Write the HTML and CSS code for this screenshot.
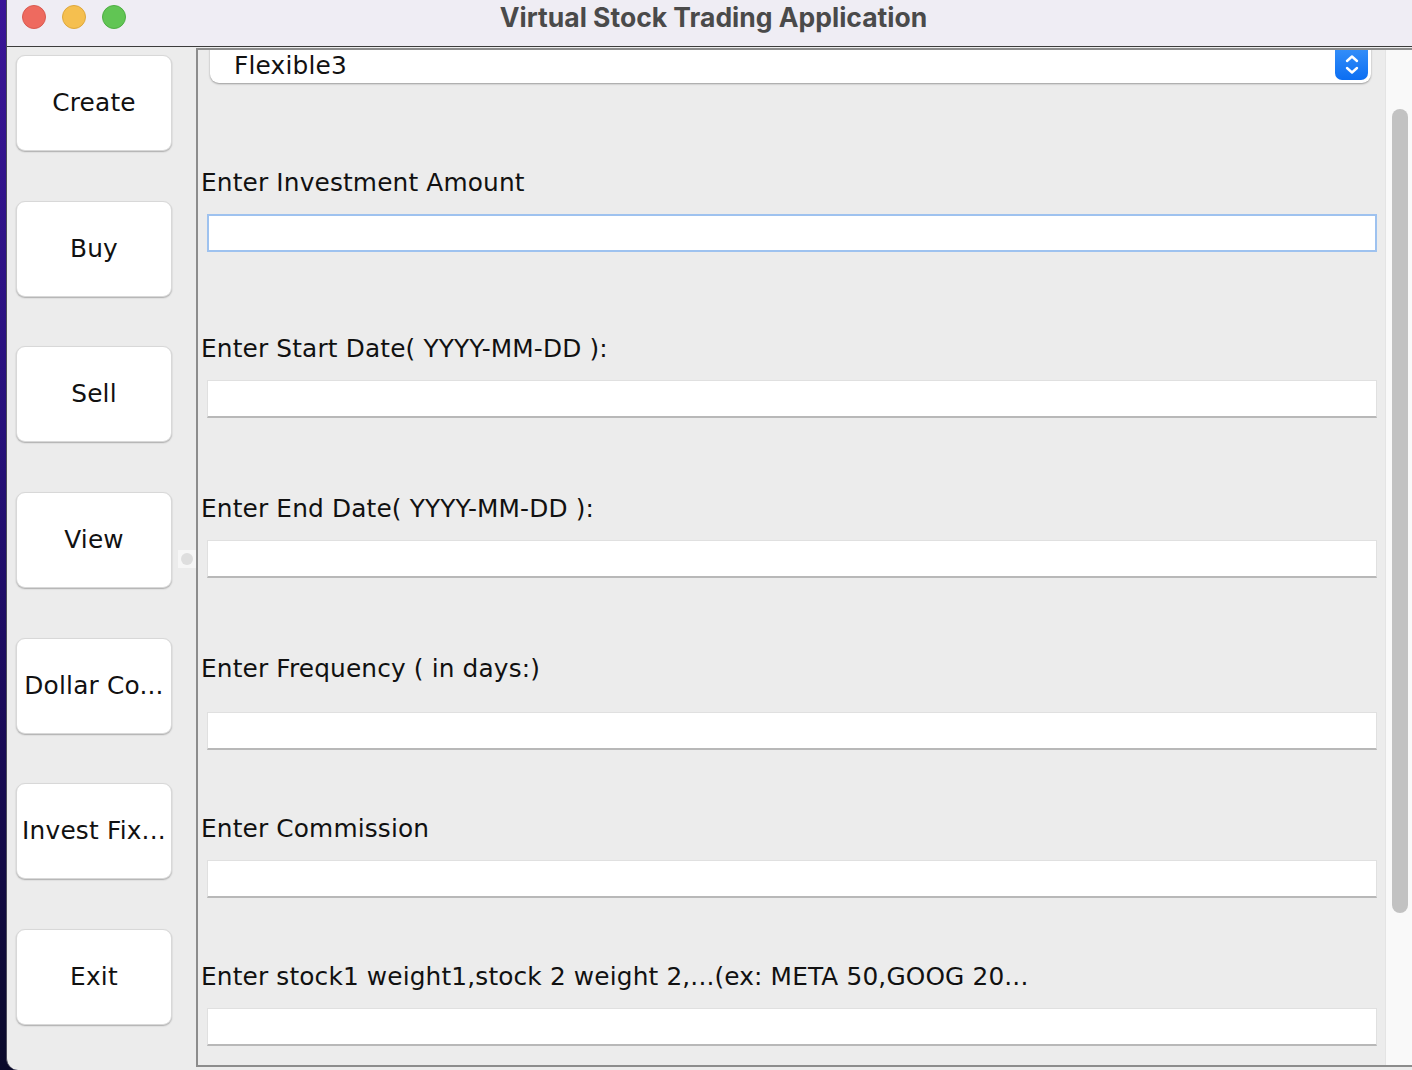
FILE: index.html
```html
<!DOCTYPE html>
<html>
<head>
<meta charset="utf-8">
<title>Virtual Stock Trading Application</title>
<link rel="stylesheet" href="styles.css">
</head>
<body>
<div class="window">
  <header class="titlebar">
    <div class="lights">
      <span class="light red"></span>
      <span class="light yellow"></span>
      <span class="light green"></span>
    </div>
    <div class="title">Virtual Stock Trading Application</div>
    <div></div>
  </header>
  <div class="content">
    <nav class="sidebar">
      <button class="btn">Create</button>
      <button class="btn">Buy</button>
      <button class="btn">Sell</button>
      <button class="btn">View</button>
      <button class="btn">Dollar Co...</button>
      <button class="btn">Invest Fix...</button>
      <button class="btn">Exit</button>
      <span class="split-handle"><span class="dot"></span></span>
    </nav>
    <main class="panel">
      <div class="scroll-area">
        <div class="combo">
          <span class="combo-text">Flexible3</span>
          <span class="combo-arrows">
            <svg width="16" height="24" viewBox="0 0 16 24"><path d="M3 8 L8 3.5 L13 8" fill="none" stroke="#fff" stroke-width="2.4" stroke-linecap="round" stroke-linejoin="round"/><path d="M3 15 L8 19.5 L13 15" fill="none" stroke="#fff" stroke-width="2.4" stroke-linecap="round" stroke-linejoin="round"/></svg>
          </span>
        </div>
        <div class="group g1">
          <label class="label">Enter Investment Amount</label>
          <div class="field focused"></div>
        </div>
        <div class="group g2">
          <label class="label">Enter Start Date( YYYY-MM-DD ):</label>
          <div class="field"></div>
        </div>
        <div class="group g3">
          <label class="label">Enter End Date( YYYY-MM-DD ):</label>
          <div class="field"></div>
        </div>
        <div class="group g3 wide-gap">
          <label class="label">Enter Frequency ( in days:)</label>
          <div class="field"></div>
        </div>
        <div class="group g5">
          <label class="label">Enter Commission</label>
          <div class="field"></div>
        </div>
        <div class="group g5">
          <label class="label">Enter stock1 weight1,stock 2 weight 2,...(ex: META 50,GOOG 20...</label>
          <div class="field"></div>
        </div>
      </div>
      <div class="scrollbar"><div class="thumb"></div></div>
    </main>
  </div>
</div>
</body>
</html>
```

FILE: styles.css
```css
* { box-sizing: border-box; }
html, body { margin: 0; padding: 0; }
body {
  width: 1412px;
  height: 1070px;
  overflow: hidden;
  background: linear-gradient(180deg, #3a1597 0%, #26107a 40%, #180a55 70%, #0a0a2a 100%);
  font-family: "DejaVu Sans", "Noto Sans", sans-serif;
  color: #111;
}
.window {
  margin-left: 6px;
  height: 1070px;
  background: #ececec;
  border-left: 1px solid #4a4a5a;
  border-bottom-left-radius: 12px;
  overflow: hidden;
  display: flex;
  flex-direction: column;
}
.titlebar {
  height: 47px;
  flex: none;
  background: #efedf4;
  border-bottom: 1px solid #3c3c3c;
  display: grid;
  grid-template-columns: 1fr auto 1fr;
  align-items: center;
}
.lights {
  display: flex;
  gap: 16px;
  padding-left: 15px;
  margin-top: -12px;
}
.light {
  width: 24px;
  height: 24px;
  border-radius: 50%;
  display: block;
}
.red { background: #ee6a5f; border: 1px solid #d95a50; }
.yellow { background: #f5bf4f; border: 1px solid #dea83c; }
.green { background: #61c554; border: 1px solid #4eae43; }
.title {
  font-family: Inter, "Liberation Sans", sans-serif;
  font-weight: 700;
  font-size: 26.5px;
  color: #4a4a4a;
  margin-top: -13px;
  padding-left: 8px;
  letter-spacing: 0;
}
.content {
  flex: 1;
  display: flex;
  min-height: 0;
}
.sidebar {
  position: relative;
  width: 189px;
  flex: none;
  padding: 8px 0 0 9px;
  display: flex;
  flex-direction: column;
  gap: 49.67px;
}
.btn {
  width: 156px;
  height: 96px;
  flex: none;
  background: #fff;
  border: 0.5px solid #d8d8d8;
  border-radius: 9px;
  box-shadow: 0 1px 1.5px rgba(0,0,0,0.28);
  font-family: "DejaVu Sans", "Noto Sans", sans-serif;
  font-size: 24.8px;
  letter-spacing: 0.2px;
  color: #111;
  padding: 0 0 1px;
  white-space: nowrap;
}
.split-handle {
  position: absolute;
  right: 0;
  top: 503px;
  width: 18px;
  height: 18px;
  background: #f6f6f6;
  display: flex;
  align-items: center;
  justify-content: center;
}
.dot {
  width: 12px;
  height: 12px;
  border-radius: 50%;
  background: #dedede;
}
.panel {
  flex: 1;
  margin-top: 1px;
  margin-bottom: 3px;
  border: 2px solid #8c8c8c;
  border-right: none;
  display: flex;
  min-width: 0;
}
.scroll-area {
  flex: 1;
  overflow: hidden;
  padding-left: 3px;
}
.combo {
  margin: -8px 14px 0 9px;
  height: 41px;
  background: #fff;
  border-radius: 0 0 9px 9px;
  box-shadow: 0 1px 2px rgba(0,0,0,0.35);
  display: flex;
  align-items: flex-end;
  justify-content: space-between;
  padding: 0 3px 3px 24px;
}
.combo-text {
  font-size: 24.8px;
  letter-spacing: 0.2px;
  line-height: 34px;
  margin-bottom: -3px;
}
.combo-arrows {
  width: 33px;
  height: 36px;
  border-radius: 0 0 7px 7px;
  background: linear-gradient(180deg, #3a93fa 0%, #0b6ef2 100%);
  display: flex;
  align-items: flex-end;
  justify-content: center;
  padding-bottom: 3px;
}
.group { display: flex; flex-direction: column; }
.g1 { margin-top: 80px; }
.g2 { margin-top: 77px; }
.g3 { margin-top: 71px; }
.g5 { margin-top: 59px; }
.label {
  font-size: 24.8px;
  letter-spacing: 0.15px;
  line-height: 34px;
  height: 34px;
  padding-top: 3px;
  white-space: nowrap;
}
.field {
  margin: 17px 8px 0 6px;
  height: 38px;
  background: #fff;
  border: 1px solid #e0e0e0;
  border-bottom: 2px solid #b8b8b8;
}
.wide-gap .field { margin-top: 29px; }
.field.focused {
  border: 2px solid #9ec2ef;
}
.scrollbar {
  width: 27px;
  flex: none;
  background: #f9f9f9;
  border-left: 1px solid #e4e4e4;
  padding: 59px 0 0 6px;
}
.thumb {
  width: 16px;
  height: 804px;
  border-radius: 8px;
  background: #c2c2c2;
}
```
